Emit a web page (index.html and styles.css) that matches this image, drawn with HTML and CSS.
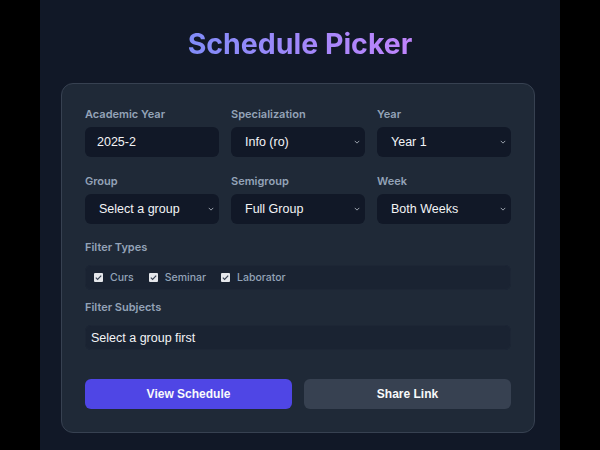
FILE: index.html
```html
<!DOCTYPE html>
<html>
<head>
<meta charset="utf-8">
<link rel="stylesheet" href="styles.css">
</head>
<body>
<main class="page">
  <h1 class="title">Schedule Picker</h1>
  <section class="card">
    <div class="grid">
      <div class="field">
        <div class="label">Academic Year</div>
        <div class="control input">2025-2</div>
      </div>
      <div class="field">
        <div class="label">Specialization</div>
        <div class="control select"><span>Info (ro)</span><svg class="chev" viewBox="0 0 8 5"><path d="M1 1l3 3 3-3"/></svg></div>
      </div>
      <div class="field">
        <div class="label">Year</div>
        <div class="control select"><span>Year 1</span><svg class="chev" viewBox="0 0 8 5"><path d="M1 1l3 3 3-3"/></svg></div>
      </div>
      <div class="field">
        <div class="label">Group</div>
        <div class="control select"><span>Select a group</span><svg class="chev" viewBox="0 0 8 5"><path d="M1 1l3 3 3-3"/></svg></div>
      </div>
      <div class="field">
        <div class="label">Semigroup</div>
        <div class="control select"><span>Full Group</span><svg class="chev" viewBox="0 0 8 5"><path d="M1 1l3 3 3-3"/></svg></div>
      </div>
      <div class="field">
        <div class="label">Week</div>
        <div class="control select"><span>Both Weeks</span><svg class="chev" viewBox="0 0 8 5"><path d="M1 1l3 3 3-3"/></svg></div>
      </div>
    </div>
    <div class="label types-label">Filter Types</div>
    <div class="types">
      <span class="check"><span class="box"><svg viewBox="0 0 10 10"><path d="M2 5.2l2 2 4-4.4"/></svg></span>Curs</span>
      <span class="check"><span class="box"><svg viewBox="0 0 10 10"><path d="M2 5.2l2 2 4-4.4"/></svg></span>Seminar</span>
      <span class="check"><span class="box"><svg viewBox="0 0 10 10"><path d="M2 5.2l2 2 4-4.4"/></svg></span>Laborator</span>
    </div>
    <div class="label subjects-label">Filter Subjects</div>
    <div class="subjects">Select a group first</div>
    <div class="actions">
      <button class="btn primary">View Schedule</button>
      <button class="btn secondary">Share Link</button>
    </div>
  </section>
</main>
</body>
</html>
```
FILE: styles.css
```css
html, body {
  margin: 0;
  padding: 0;
  background: #000;
  height: 100%;
}
body {
  font-family: Inter, "Liberation Sans", sans-serif;
}
.page {
  width: 520px;
  margin: 0 auto;
  min-height: 450px;
  background: #111827;
  padding: 26px 0 0;
  box-sizing: border-box;
  overflow: hidden;
}
.title {
  margin: 0 auto 21px;
  text-align: center;
  font-size: 28.5px;
  line-height: 36px;
  font-weight: 700;
  background: linear-gradient(90deg, #818cf8 0%, #c084fc 100%);
  -webkit-background-clip: text;
  background-clip: text;
  color: transparent;
  width: max-content;
}
.card {
  margin: 0 25px 0 21px;
  background: #1f2937;
  border: 1px solid #374151;
  border-radius: 12px;
  padding: 23px 23px 23px;
}
.grid {
  display: grid;
  grid-template-columns: repeat(3, 1fr);
  column-gap: 12px;
  row-gap: 17px;
}
.label {
  font-size: 11px;
  line-height: 14px;
  font-weight: 600;
  color: #94a3b8;
  margin-bottom: 6px;
}
.control {
  height: 30px;
  border-radius: 6px;
  background: #111827;
  color: #f3f4f6;
  font-family: "Liberation Sans", Arial, sans-serif;
  font-size: 12.5px;
  display: flex;
  align-items: center;
  box-sizing: border-box;
}
.input {
  padding-left: 12px;
}
.select {
  padding: 0 5px 0 14px;
  justify-content: space-between;
}
.chev {
  width: 6px;
  height: 4px;
  fill: none;
  stroke: #9ca3af;
  stroke-width: 1.3;
}
.types-label {
  margin-top: 16px;
  margin-bottom: 11px;
}
.types {
  height: 25px;
  background: #1a2332;
  border-radius: 6px;
  box-shadow: inset 0 0 0 1px #1d2635;
  display: flex;
  align-items: center;
  gap: 15px;
  padding-left: 9px;
}
.check {
  display: flex;
  align-items: center;
  gap: 7px;
  font-size: 10.5px;
  font-weight: 500;
  color: #94a3b8;
}
.box {
  width: 9px;
  height: 9px;
  background: #e5e7eb;
  border-radius: 1px;
  display: flex;
}
.box svg {
  width: 9px;
  height: 9px;
  fill: none;
  stroke: #374151;
  stroke-width: 1.3;
}
.subjects-label {
  margin-top: 10px;
  margin-bottom: 11px;
}
.subjects {
  height: 25px;
  background: #1a2332;
  border-radius: 6px;
  box-shadow: inset 0 0 0 1px #1d2635;
  display: flex;
  align-items: center;
  padding-left: 6px;
  font-family: "Liberation Sans", Arial, sans-serif;
  font-size: 12.5px;
  color: #f3f4f6;
}
.actions {
  display: grid;
  grid-template-columns: 1fr 1fr;
  gap: 12px;
  margin-top: 29px;
}
.btn {
  height: 30px;
  border: 0;
  border-radius: 6px;
  font-family: "Liberation Sans", Arial, sans-serif;
  font-size: 12px;
  font-weight: 700;
  color: #f9fafb;
}
.primary { background: #4f46e5; }
.secondary { background: #374151; }
```
